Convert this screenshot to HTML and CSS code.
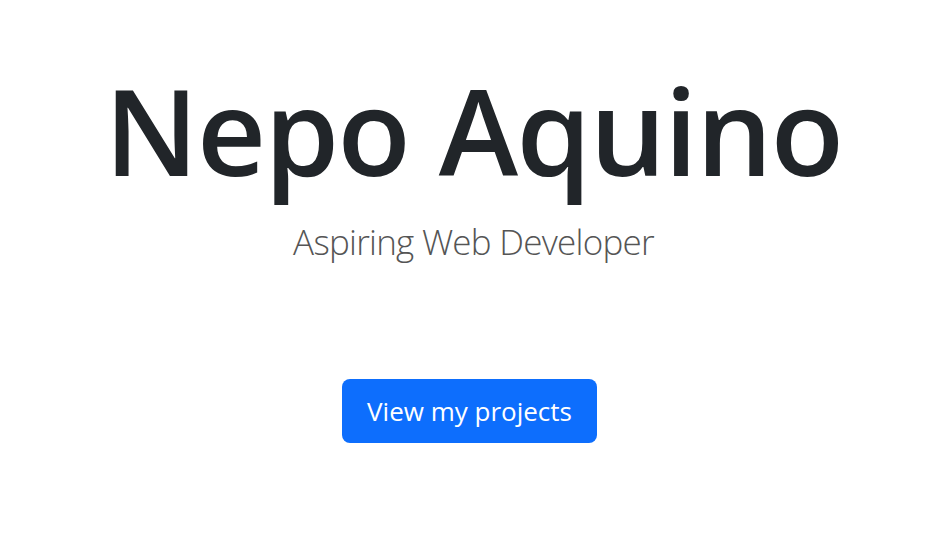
FILE: index.html
```html
<!DOCTYPE html>
<html lang="en">
<head>
<meta charset="utf-8">
<title>Nepo Aquino</title>
<link rel="stylesheet" href="styles.css">
</head>
<body>
<main class="hero">
  <h1 class="hero-title">Nepo Aquino</h1>
  <p class="hero-subtitle">Aspiring Web Developer</p>
  <a class="btn-primary" href="#projects">View my projects</a>
</main>
</body>
</html>
```

FILE: styles.css
```css
* { box-sizing: border-box; }
html, body { margin: 0; padding: 0; background: #fff; }
body {
  font-family: "Open Sans", "Noto Sans", sans-serif;
  color: #212529;
  width: 947px;
  height: 554px;
  overflow: hidden;
}
.hero {
  display: flex;
  flex-direction: column;
  align-items: center;
  padding-top: 55px;
}
.hero-title {
  margin: 0;
  font-size: 120px;
  font-weight: 600;
  line-height: 150px;
  letter-spacing: -1.6px;
  color: #212529;
}
.hero-subtitle {
  margin: 15px 0 0;
  font-size: 35px;
  font-weight: 300;
  line-height: 44px;
  letter-spacing: -0.75px;
  color: #555;
}
.btn-primary {
  margin: 115px 8px 0 0;
  display: inline-block;
  background: #0d6efd;
  color: #fff;
  text-decoration: none;
  font-size: 26px;
  line-height: 32px;
  padding: 16px 25px;
  border-radius: 8px;
}
```
